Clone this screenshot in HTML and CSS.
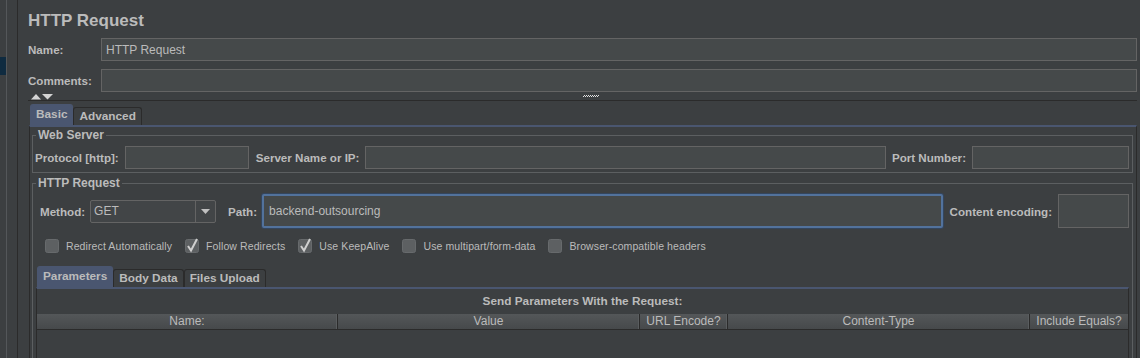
FILE: index.html
```html
<!DOCTYPE html>
<html lang="en">
<head>
  <meta charset="UTF-8" />
  <title>HTTP Request</title>
  <link rel="stylesheet" href="styles.css">
</head>
<body>
  <div class="app">
    <div class="tree">
      <div class="tree-sel"></div>
    </div>
    <div class="editor">
      <h1 class="title">HTTP Request</h1>
      <div class="row name-row">
        <span class="lbl">Name:</span>
        <div class="field">HTTP Request</div>
      </div>
      <div class="row comments-row">
        <span class="lbl">Comments:</span>
        <div class="field"></div>
      </div>
      <div class="splitter">
        <svg class="arrows" width="24" height="7" viewBox="0 0 24 7">
          <polygon points="1,6.5 6,1 11,6.5" fill="#d4d4d4"/>
          <polygon points="12,1 23,1 17.5,6.5" fill="#d4d4d4"/>
        </svg>
        <svg class="grip" width="16" height="4" viewBox="0 0 16 4">
          <defs>
            <pattern id="dots" width="2" height="2" patternUnits="userSpaceOnUse">
              <rect width="1" height="1" fill="#e0e0e0"/>
              <rect x="1" y="1" width="1" height="1" fill="#e0e0e0"/>
            </pattern>
          </defs>
          <rect y="1" width="16" height="2" fill="url(#dots)"/>
        </svg>
      </div>
      <div class="tabs">
        <span class="tab active">Basic</span>
        <span class="tab">Advanced</span>
      </div>
      <div class="tab-panel">
        <fieldset class="group">
          <legend>Web Server</legend>
          <div class="row server-row">
            <span class="lbl">Protocol [http]:</span>
            <div class="field protocol"></div>
            <span class="lbl server-lbl">Server Name or IP:</span>
            <div class="field grow"></div>
            <span class="lbl">Port Number:</span>
            <div class="field port"></div>
          </div>
        </fieldset>
        <fieldset class="group request">
          <legend>HTTP Request</legend>
          <div class="request-body">
            <div class="row method-row">
              <span class="lbl">Method:</span>
              <div class="select">
                <span class="select-val">GET</span>
                <span class="select-btn">
                  <svg width="9" height="5" viewBox="0 0 9 5"><polygon points="0,0 9,0 4.5,5" fill="#c0c0c0"/></svg>
                </span>
              </div>
              <span class="lbl path-lbl">Path:</span>
              <div class="field grow path">backend-outsourcing</div>
              <span class="lbl">Content encoding:</span>
              <div class="field encoding"></div>
            </div>
            <div class="checks">
              <label class="check">
                <svg width="14" height="15" viewBox="0 0 14 15"><rect x="0.5" y="1.5" width="13" height="13" rx="2" fill="#5d6062" stroke="#676a6c"/></svg>
                Redirect Automatically
              </label>
              <label class="check">
                <svg width="14" height="15" viewBox="0 0 14 15"><rect x="0.5" y="1.5" width="13" height="13" rx="2" fill="#5d6062" stroke="#676a6c"/><path d="M3 8 L6 12.5 L12 1" stroke="#cfcfcf" stroke-width="2" fill="none"/></svg>
                Follow Redirects
              </label>
              <label class="check">
                <svg width="14" height="15" viewBox="0 0 14 15"><rect x="0.5" y="1.5" width="13" height="13" rx="2" fill="#5d6062" stroke="#676a6c"/><path d="M3 8 L6 12.5 L12 1" stroke="#cfcfcf" stroke-width="2" fill="none"/></svg>
                Use KeepAlive
              </label>
              <label class="check">
                <svg width="14" height="15" viewBox="0 0 14 15"><rect x="0.5" y="1.5" width="13" height="13" rx="2" fill="#5d6062" stroke="#676a6c"/></svg>
                Use multipart/form-data
              </label>
              <label class="check">
                <svg width="14" height="15" viewBox="0 0 14 15"><rect x="0.5" y="1.5" width="13" height="13" rx="2" fill="#5d6062" stroke="#676a6c"/></svg>
                Browser-compatible headers
              </label>
            </div>
            <div class="tabs param-tabs">
              <span class="tab active">Parameters</span>
              <span class="tab">Body Data</span>
              <span class="tab">Files Upload</span>
            </div>
            <div class="param-panel">
              <div class="caption">Send Parameters With the Request:</div>
              <div class="thead">
                <span>Name:</span>
                <span>Value</span>
                <span>URL Encode?</span>
                <span>Content-Type</span>
                <span>Include Equals?</span>
              </div>
            </div>
          </div>
        </fieldset>
      </div>
    </div>
  </div>
</body>
</html>
```

FILE: styles.css
```css
html, body {
  margin: 0;
  padding: 0;
  height: 358px;
  overflow: hidden;
  background: #3c3f41;
  color: #bbbbbb;
  font-family: "Liberation Sans", Arial, sans-serif;
  font-size: 12px;
}
.app {
  display: flex;
  height: 358px;
}
/* left tree strip */
.tree {
  width: 17px;
  flex: none;
  border-right: 1px solid #2b2b2b;
  background: linear-gradient(to right, #3c3f41 6px, #54575a 6px, #54575a 7px, #3c3f41 7px);
}
.tree-sel {
  width: 6px;
  height: 18px;
  margin-top: 57px;
  background: #0f2b40;
}
.editor {
  flex: 1;
  min-width: 0;
  display: flex;
  flex-direction: column;
  padding: 11px 3px 0 10px;
}
.title {
  margin: 0;
  font-size: 17px;
  line-height: 20px;
  font-weight: bold;
  color: #bbbbbb;
}
.row {
  display: flex;
  align-items: center;
}
.lbl {
  font-weight: bold;
  font-size: 11.6px;
  white-space: nowrap;
  flex: none;
}
.field {
  box-sizing: border-box;
  height: 23px;
  line-height: 21px;
  border: 1px solid #646464;
  background: #45494a;
  padding: 0 4px;
  white-space: nowrap;
}
.grow {
  flex: 1;
  min-width: 0;
}
.name-row {
  margin-top: 7px;
}
.comments-row {
  margin-top: 8px;
}
.name-row .lbl,
.comments-row .lbl {
  width: 73px;
}
.name-row .field,
.comments-row .field {
  flex: 1;
}
.name-row .field {
  line-height: 22px;
}
.splitter {
  height: 9px;
  border-bottom: 1px solid #2b2b2b;
  display: flex;
  align-items: center;
  padding-left: 2px;
}
.grip {
  margin-left: 529px;
}
/* tabs */
.tabs {
  display: flex;
  align-items: flex-end;
  height: 21px;
  margin: 3px 0 0 2px;
}
.tab {
  box-sizing: border-box;
  height: 18px;
  line-height: 17px;
  padding: 0 5px;
  border: 1px solid #2b2b2b;
  border-bottom: none;
  border-radius: 3px 3px 0 0;
  font-weight: bold;
  background: #3c3f41;
  font-size: 11.8px;
}
.tab.active {
  height: 21px;
  line-height: 19px;
  background: #4a5670;
  border-color: #4a5670;
}
.tab-panel {
  flex: 1;
  display: flex;
  flex-direction: column;
  margin-left: 1px;
  border-top: 2px solid #4a5670;
  border-left: 1px solid #2b2b2b;
  border-right: 1px solid #2b2b2b;
  padding: 1px 3px 0 2px;
}
.group {
  margin: 0;
  padding: 0 3px 3px 2px;
  border: 1px solid #5c5f61;
  min-width: 0;
}
.group legend {
  padding: 0 2px;
  margin-left: 1px;
  font-weight: bold;
  line-height: 14px;
}
.server-row {
  margin-top: 4px;
  gap: 6px;
}
.server-lbl {
  margin-left: 1px;
}
.protocol {
  width: 124px;
  flex: none;
}
.port {
  width: 157px;
  flex: none;
}
.request {
  flex: 1;
  margin-top: 3px;
  border-bottom: none;
  padding-bottom: 0;
}
.request-body {
  display: flex;
  flex-direction: column;
  height: 168px;
}
.method-row {
  margin: 4px 0 0 5px;
  height: 34px;
}
.select {
  box-sizing: border-box;
  width: 126px;
  height: 23px;
  margin-left: 5px;
  display: flex;
  border: 1px solid #646464;
  border-radius: 2px;
  background: #424547;
}
.select-val {
  flex: 1;
  padding-left: 3px;
  line-height: 21px;
}
.select-btn {
  width: 19px;
  border-left: 1px solid #646464;
  display: flex;
  align-items: center;
  justify-content: center;
}
.path-lbl {
  margin-left: 12px;
}
.path {
  height: 34px;
  line-height: 30px;
  margin: 0 7px 0 5px;
  border: 2px solid #52729c;
  border-radius: 2px;
  box-shadow: 0 0 0 1px #34465e;
  padding-left: 5px;
}
.encoding {
  width: 71px;
  height: 34px;
  flex: none;
  margin-left: 6px;
}
.checks {
  display: flex;
  align-items: center;
  gap: 13px;
  height: 16px;
  margin: 10px 0 0 10px;
}
.check {
  display: flex;
  align-items: center;
  gap: 7px;
  font-size: 10.5px;
  letter-spacing: 0.1px;
  white-space: nowrap;
}
.check svg {
  flex: none;
  margin-top: -2px;
}
.param-tabs {
  margin-top: 12px;
}
.param-panel {
  flex: 1;
  margin-left: 1px;
  border-top: 2px solid #4a5670;
  border-left: 1px solid #2b2b2b;
  border-right: 1px solid #2b2b2b;
}
.caption {
  height: 25px;
  line-height: 24px;
  text-align: center;
  font-weight: bold;
  font-size: 11.8px;
}
.thead {
  display: grid;
  grid-template-columns: 301px 302px 88px 302px 98px;
  height: 16px;
  box-sizing: border-box;
  border-bottom: 1px solid #2b2b2b;
  background: linear-gradient(#545759, #46494b);
}
.thead span {
  text-align: center;
  line-height: 15px;
  border-right: 1px solid #2b2b2b;
  box-shadow: inset -1px 0 0 #5a5d5f;
}
.thead span:last-child {
  border-right: none;
  box-shadow: none;
}
```
